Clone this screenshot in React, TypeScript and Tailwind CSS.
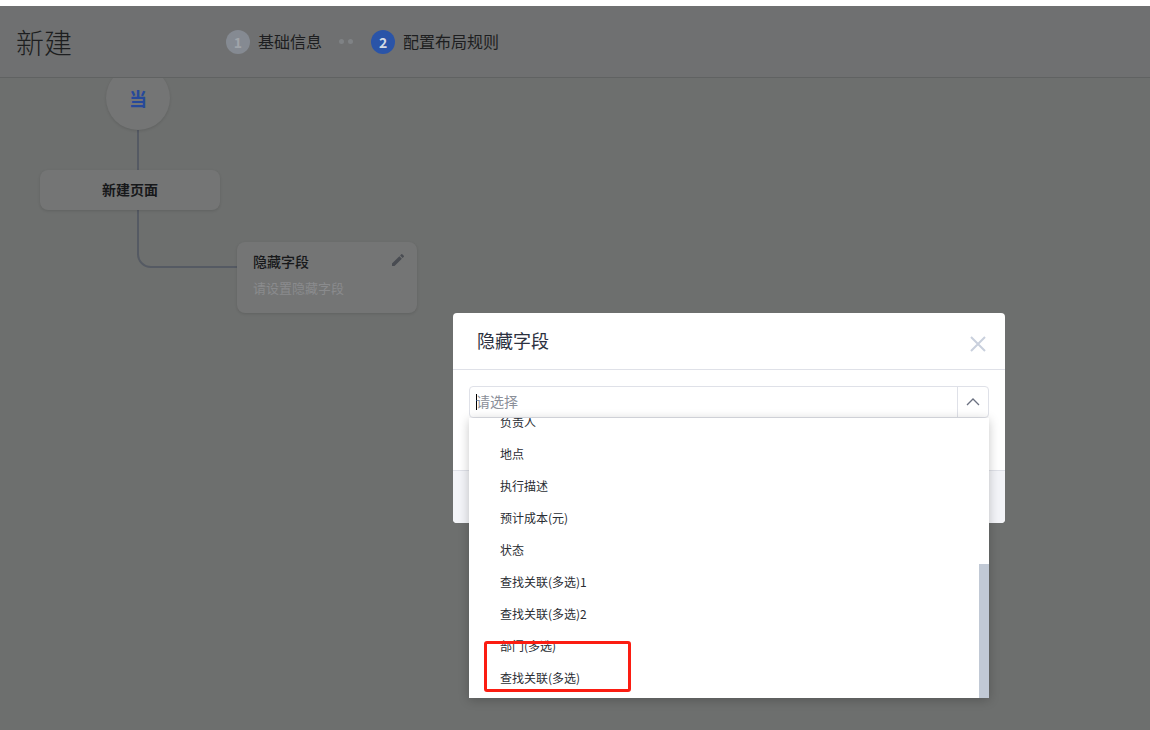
const cjk = "font-['Noto_Sans_CJK_SC','Noto_Sans',sans-serif]";

const options = ["负责人", "地点", "执行描述", "预计成本(元)", "状态", "查找关联(多选)1", "查找关联(多选)2", "部门(多选)", "查找关联(多选)"];

function Stepper() {
  return (
    <div className="ml-[154px] flex items-center">
      <span className="flex h-6 w-6 items-center justify-center rounded-full bg-[#858a92] text-sm font-bold text-[#a0a4a9]">1</span>
      <span className="ml-[8px] -mt-[2px] text-base leading-6 text-[#1d1e20]">基础信息</span>
      <span className="ml-[17px] h-[5px] w-[5px] rounded-full bg-[#7f8285]" />
      <span className="ml-1 h-[5px] w-[5px] rounded-full bg-[#7f8285]" />
      <span className="ml-[18px] flex h-6 w-6 items-center justify-center rounded-full bg-[#2a54a8] text-sm font-bold text-[#d5dae4]">2</span>
      <span className="ml-[8px] -mt-[2px] text-base leading-6 text-[#1d1e20]">配置布局规则</span>
    </div>
  );
}

function Canvas() {
  return (
    <div className="relative h-[652px] overflow-hidden">
      <svg className="absolute left-0 top-0" width="260" height="220" fill="none">
        <path d="M138 50V176a13 13 0 0 0 13 13H240" stroke="#555a63" strokeWidth="2" />
      </svg>
      <div className="absolute left-[106px] top-[-12px] flex h-16 w-16 items-center justify-center rounded-full bg-[#747575] text-lg font-bold text-[#26499a] shadow-[0_1px_3px_rgba(0,0,0,0.12)]">
        当
      </div>
      <div className="absolute left-10 top-[92px] flex h-10 w-[180px] items-center justify-center rounded-lg bg-[#747575] pb-[2px] text-sm font-bold text-[#17181a] shadow-[0_1px_3px_rgba(0,0,0,0.12)]">
        新建页面
      </div>
      <div className="absolute left-[237px] top-[164px] h-[71px] w-[180px] rounded-lg bg-[#747575] px-4 pt-[9px] shadow-[0_1px_3px_rgba(0,0,0,0.12)]">
        <div className="flex items-center justify-between">
          <span className="text-[14px] font-medium leading-5 text-[#17181a]">隐藏字段</span>
          <svg className="-mr-[5px] -mt-[2px]" width="16" height="16" viewBox="0 0 24 24" fill="#494c52">
            <path d="M3 17.25V21h3.75L17.81 9.94l-3.75-3.75L3 17.25zM20.71 7.04a1 1 0 0 0 0-1.41l-2.34-2.34a1 1 0 0 0-1.41 0l-1.83 1.83 3.75 3.75 1.83-1.83z" />
          </svg>
        </div>
        <p className="mt-[7px] text-[13px] leading-5 text-[#8a8b8d]">请设置隐藏字段</p>
      </div>
    </div>
  );
}

function Dropdown() {
  return (
    <div className="absolute left-4 top-[105px] z-10 h-[280px] w-[520px] overflow-hidden bg-white shadow-[0_2px_10px_rgba(0,0,0,0.22)]">
      <ul className="-mt-3">
        {options.map((o) => (
          <li key={o} className="flex h-8 items-center pl-[31px] text-xs text-[#2a2d33]">
            {o}
          </li>
        ))}
      </ul>
      <div className="absolute bottom-0 right-0 h-[134px] w-[10px] bg-[#c1c9d5]" />
    </div>
  );
}

function Modal() {
  return (
    <div className="absolute left-[453px] top-[313px] h-[210px] w-[552px] rounded bg-white">
      <div className="flex h-[57px] items-center justify-between border-b border-[#dfe1e8] pl-6 pr-[18px]">
        <h2 className="-mt-[2px] text-lg text-[#2c3140]">隐藏字段</h2>
        <svg className="mt-[6px]" width="18" height="18" viewBox="0 0 18 18" fill="none" stroke="#c9d0dd" strokeWidth="2">
          <path d="M2 2l14 14M16 2L2 16" />
        </svg>
      </div>
      <div className="px-4 pt-4">
        <div className="flex h-8 rounded-sm border border-[#dfe1e8]">
          <div className="flex flex-1 items-center pl-[6px] text-sm text-[#8b8f99]">
            <span className="h-4 w-px bg-black" />
            <span className="-ml-px -mt-[2px]">请选择</span>
          </div>
          <div className="flex w-[31px] items-center justify-center border-l border-[#dfe1e8]">
            <svg width="14" height="8" viewBox="0 0 14 8" fill="none" stroke="#6a7080" strokeWidth="1.3">
              <path d="M1 7l6-6 6 6" />
            </svg>
          </div>
        </div>
      </div>
      <div className="absolute bottom-0 left-0 right-0 h-[53px] rounded-b border-t border-[#dfe1e8] bg-[#f3f4f8]" />
      <Dropdown />
    </div>
  );
}

export default function App() {
  return (
    <div className={`relative h-[730px] w-[1150px] overflow-hidden bg-[#6d6f6e] ${cjk}`}>
      <div className="h-[6px] bg-white" />
      <header className="flex h-[72px] items-center border-b border-[#606262] bg-[#6f7071] pl-[16px]">
        <h1 className="w-[56px] text-[28px] font-light leading-9 text-[#1d1e20]">新建</h1>
        <Stepper />
      </header>
      <Canvas />
      <Modal />
      <div className="absolute left-[484px] top-[641px] z-20 h-[51px] w-[147px] rounded-[3px] border-[3px] border-[#fb1d12]" />
    </div>
  );
}
